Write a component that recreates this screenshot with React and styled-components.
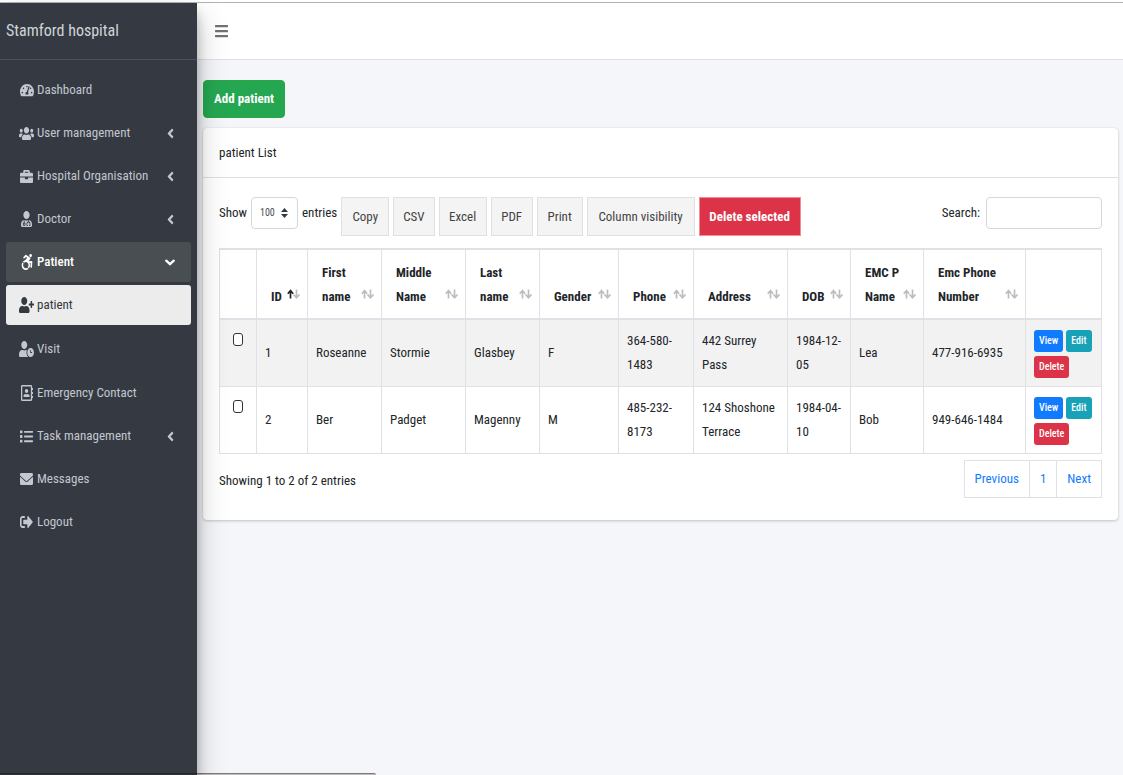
import React, { useState } from "react";
import styled, { createGlobalStyle, css } from "styled-components";
import {
  FaTachometerAlt,
  FaUsers,
  FaBriefcase,
  FaUserMd,
  FaAccessibleIcon,
  FaUserPlus,
  FaUserClock,
  FaRegAddressBook,
  FaList,
  FaEnvelope,
  FaSignOutAlt,
  FaAngleLeft,
  FaAngleDown,
  FaBars,
} from "react-icons/fa";

const GlobalStyle = createGlobalStyle`
  *, *::before, *::after { box-sizing: border-box; }
  body {
    margin: 0;
    background: #f4f6f9;
    color: #212529;
    font-family: "Roboto Condensed", "Source Sans 3", "Noto Sans CJK JP", sans-serif;
    font-size: 13px;
    line-height: 24px;
  }
  button, input, select { font: inherit; color: inherit; }
  a { text-decoration: none; }
`;

const Page = styled.div`
  display: flex;
  min-height: calc(100vh - 2px);
  margin-top: 2px;
  border-top: 1px solid #b3b2b5;
  box-shadow: 0 -2px 0 #fff;
`;

const Sidebar = styled.aside`
  position: relative;
  z-index: 2;
  flex: 0 0 197px;
  background: #353a42;
  box-shadow: 0 14px 28px rgba(0, 0, 0, 0.25), 0 10px 10px rgba(0, 0, 0, 0.22);
`;

const Brand = styled.a`
  display: flex;
  align-items: center;
  height: 57px;
  padding: 0 6px;
  border-bottom: 1px solid #4b545c;
  color: #d0d4d8;
  font-size: 16px;
`;

const Nav = styled.nav`
  padding: 10px 6px;
`;

const NavList = styled.ul`
  display: flex;
  flex-direction: column;
  gap: ${(p) => (p.$sub ? "4px" : "3px")};
  margin: 0;
  margin-top: ${(p) => (p.$sub ? "3px" : "0")};
  padding: 0;
  list-style: none;
`;

const NavLink = styled.a`
  display: flex;
  align-items: center;
  gap: 3px;
  height: 40px;
  padding: 0 16px 0 13px;
  border-radius: 3px;
  color: #c2c7d0;
  ${(p) =>
    p.$tone === "open" &&
    css`
      background: #494e52;
      color: #fff;
      font-weight: 500;
    `}
  ${(p) =>
    p.$tone === "current" &&
    css`
      background: #ebeceb;
      color: #343a40;
    `}
`;

const NavIcon = styled.span`
  display: flex;
  justify-content: center;
  width: 15px;
  svg {
    width: ${(p) => p.$w || 13}px;
    height: ${(p) => p.$h || 14}px;
  }
`;

const NavText = styled.span`
  flex: 1;
  white-space: nowrap;
`;

const Chevron = styled.span`
  display: flex;
  justify-content: center;
  width: 10px;
  svg {
    width: ${(p) => (p.$down ? 10 : 7)}px;
    height: 15px;
  }
`;

const Main = styled.div`
  flex: 1;
  min-width: 0;
`;

const TopBar = styled.header`
  display: flex;
  align-items: center;
  height: 57px;
  padding: 0 18px;
  background: #fff;
  border-bottom: 1px solid #dee2e6;
`;

const MenuButton = styled.button`
  display: flex;
  padding: 0;
  border: 0;
  background: none;
  color: #727272;
  svg {
    width: 13px;
    height: 16px;
  }
`;

const Content = styled.main`
  padding: 20px 5px 20px 6px;
`;

const AddButton = styled.button`
  height: 38px;
  padding: 0 10px;
  border: 1px solid #28a745;
  border-radius: 4px;
  background: #25a752;
  color: #fff;
  font-weight: 700;
`;

const Card = styled.section`
  margin-top: 10px;
  border-radius: 4px;
  background: #fff;
  box-shadow: 0 0 1px rgba(0, 0, 0, 0.13), 0 1px 3px rgba(0, 0, 0, 0.2);
`;

const CardHeader = styled.h2`
  margin: 0;
  padding: 13px 16px 12px;
  border-bottom: 1px solid #dfdfdf;
  font-size: 13px;
  font-weight: 400;
`;

const CardBody = styled.div`
  padding: 19px 16px 22px;
`;

const Tools = styled.div`
  display: flex;
  align-items: flex-start;
  justify-content: space-between;
  height: 51px;
`;

const ToolGroup = styled.div`
  display: flex;
  align-items: flex-start;
  gap: 4px;
`;

const Field = styled.label`
  display: flex;
  align-items: center;
  gap: ${(p) => p.$gap}px;
  height: 32px;
`;

const LengthBox = styled.span`
  display: flex;
  align-items: center;
  width: 47px;
  height: 32px;
  padding-right: 9px;
  border: 1px solid #d3d8dd;
  border-radius: 4px;
  svg {
    flex: none;
    width: 7px;
    height: 10px;
  }
`;

const LengthSelect = styled.select`
  flex: 1;
  min-width: 0;
  height: 28px;
  padding: 0 0 0 8px;
  border: 0;
  background: none;
  appearance: none;
  color: #495057;
  font-size: 10px;
`;

const SearchInput = styled.input`
  width: 116px;
  height: 32px;
  padding: 0 8px;
  border: 1px solid #d3d8dd;
  border-radius: 4px;
  background: #fff;
`;

const ToolButton = styled.button`
  min-width: ${(p) => p.$min}px;
  height: 39px;
  padding: 0 9px;
  border: 1px solid ${(p) => (p.$danger ? "#ee8f98" : "#dfe0e0")};
  background: ${(p) => (p.$danger ? "#dc3348" : "#f4f4f4")};
  color: ${(p) => (p.$danger ? "#fff" : "#444")};
  font-weight: ${(p) => (p.$danger ? 700 : 400)};
  white-space: nowrap;
`;

const Table = styled.table`
  width: 100%;
  table-layout: fixed;
  border-collapse: collapse;
  border: 1px solid #dee2e6;
`;

const Col = styled.col`
  width: ${(p) => p.$w}px;
`;

const HeadCell = styled.th`
  height: 70px;
  padding: 10px 6px 9px 14px;
  border: 1px solid #dee2e6;
  border-top-width: 2px;
  border-bottom-width: 2px;
  text-align: left;
  vertical-align: bottom;
`;

const HeadLabel = styled.span`
  display: flex;
  align-items: flex-end;
  justify-content: space-between;
  gap: 1px;
  svg {
    flex: none;
    width: 14px;
    height: 24px;
  }
`;

const BodyRow = styled.tr`
  background: ${(p) => (p.$striped ? "#f2f2f2" : "#fff")};
`;

const Cell = styled.td`
  height: 67px;
  padding: 7px 7px 7px 8px;
  border: 1px solid #dee2e6;
  vertical-align: ${(p) => (p.$top ? "top" : "middle")};
`;

const Check = styled.input`
  display: block;
  width: 10px;
  height: 13px;
  margin: 6px 0 0 5px;
  border: 1px solid #333;
  border-radius: 3px;
  background: #fff;
  appearance: none;
  &:checked {
    background: #0075ff;
  }
`;

const Actions = styled.div`
  display: flex;
  flex-wrap: wrap;
  gap: 4px 3px;
  padding-top: 3px;
`;

const ActionLink = styled.a`
  height: 22px;
  padding: 0 5px;
  border-radius: 3px;
  background: ${(p) => p.$color};
  color: #fff;
  font-size: 10px;
  font-weight: 500;
  line-height: 22px;
`;

const Footer = styled.div`
  display: flex;
  align-items: flex-start;
  justify-content: space-between;
  padding-top: 6px;
`;

const Info = styled.div`
  padding-top: 9px;
`;

const Pager = styled.nav`
  display: flex;
  border: 1px solid #dee2e6;
`;

const PageLink = styled.a`
  padding: 6px 10px;
  color: #107bff;
  & + & {
    border-left: 1px solid #dee2e6;
  }
`;

const StatusEdge = styled.div`
  position: fixed;
  z-index: 3;
  bottom: 0;
  left: 0;
  width: 376px;
  height: 2px;
  border-top: 1px solid rgba(30, 20, 25, 0.4);
  border-top-right-radius: 2px;
  background: rgba(30, 20, 25, 0.25);
`;

function SortArrows({ sorted }) {
  return (
    <svg viewBox="0 0 14 24" fill="none" strokeWidth="1.7" aria-hidden="true">
      <path d="M3.500 13.500V5.500M0.800 8.700L3.500 5.500L6.200 8.700" stroke={sorted ? "#212529" : "#bcbdbe"} />
      <path d="M9.500 4.500V12.500M6.500 9.500L9.500 12.800L12.500 9.500" stroke="#bcbdbe" />
    </svg>
  );
}

const beforePatient = [
  { label: "Dashboard", icon: FaTachometerAlt, w: 14 },
  { label: "User management", icon: FaUsers, w: 15, h: 15, more: true },
  { label: "Hospital Organisation", icon: FaBriefcase, h: 15, more: true },
  { label: "Doctor", icon: FaUserMd, w: 11, h: 16, more: true },
];

const patientItems = [
  { label: "patient", icon: FaUserPlus, w: 15, h: 16, tone: "current" },
  { label: "Visit", icon: FaUserClock, w: 15, h: 16 },
  { label: "Emergency Contact", icon: FaRegAddressBook, w: 12, h: 16 },
];

const afterPatient = [
  { label: "Task management", icon: FaList, h: 15, more: true },
  { label: "Messages", icon: FaEnvelope, h: 16 },
  { label: "Logout", icon: FaSignOutAlt, h: 16 },
];

const columns = [
  { w: 37 },
  { w: 51, label: "ID", sorted: true },
  { w: 74, label: "First name" },
  { w: 84, label: "Middle Name" },
  { w: 74, label: "Last name" },
  { w: 79, label: "Gender" },
  { w: 75, label: "Phone" },
  { w: 94, label: "Address" },
  { w: 63, label: "DOB" },
  { w: 73, label: "EMC P Name" },
  { w: 102, label: "Emc Phone Number" },
  { w: 76 },
];

const patients = [
  ["1", "Roseanne", "Stormie", "Glasbey", "F", "364-580-1483", "442 Surrey Pass", "1984-12-05", "Lea", "477-916-6935"],
  ["2", "Ber", "Padget", "Magenny", "M", "485-232-8173", "124 Shoshone Terrace", "1984-04-10", "Bob", "949-646-1484"],
];

const exportsList = [
  ["Copy", 48],
  ["CSV", 41],
  ["Excel", 48],
  ["PDF", 42],
  ["Print", 46],
  ["Column visibility", 108],
];

function NavItem({ item, children }) {
  const Icon = item.icon;
  return (
    <li>
      <NavLink href="#" $tone={item.tone}>
        <NavIcon $w={item.w} $h={item.h}>
          <Icon preserveAspectRatio="none" />
        </NavIcon>
        <NavText>{item.label}</NavText>
        {item.more && (
          <Chevron $down={item.tone === "open"}>
            {item.tone === "open" ? (
              <FaAngleDown preserveAspectRatio="none" />
            ) : (
              <FaAngleLeft preserveAspectRatio="none" />
            )}
          </Chevron>
        )}
      </NavLink>
      {children}
    </li>
  );
}

export default function App() {
  const [query, setQuery] = useState("");
  return (
    <>
      <GlobalStyle />
      <Page>
        <Sidebar>
          <Brand href="#">Stamford hospital</Brand>
          <Nav>
            <NavList>
              {beforePatient.map((item) => (
                <NavItem key={item.label} item={item} />
              ))}
              <NavItem item={{ label: "Patient", icon: FaAccessibleIcon, w: 12, h: 16, more: true, tone: "open" }}>
                <NavList $sub>
                  {patientItems.map((item) => (
                    <NavItem key={item.label} item={item} />
                  ))}
                </NavList>
              </NavItem>
              {afterPatient.map((item) => (
                <NavItem key={item.label} item={item} />
              ))}
            </NavList>
          </Nav>
        </Sidebar>
        <Main>
          <TopBar>
            <MenuButton aria-label="Toggle menu">
              <FaBars preserveAspectRatio="none" />
            </MenuButton>
          </TopBar>
          <Content>
            <AddButton>Add patient</AddButton>
            <Card>
              <CardHeader>patient List</CardHeader>
              <CardBody>
                <Tools>
                  <ToolGroup>
                    <Field $gap={4}>
                      Show
                      <LengthBox>
                        <LengthSelect defaultValue="100">
                          <option>10</option>
                          <option>25</option>
                          <option>50</option>
                          <option>100</option>
                        </LengthSelect>
                        <svg viewBox="0 0 7 10" fill="#343a40" aria-hidden="true">
                          <path d="M0 4L3.500 0L7 4ZM0 6H7L3.500 10Z" />
                        </svg>
                      </LengthBox>
                      entries
                    </Field>
                    {exportsList.map(([label, min]) => (
                      <ToolButton key={label} $min={min}>
                        {label}
                      </ToolButton>
                    ))}
                    <ToolButton $danger $min={102}>
                      Delete selected
                    </ToolButton>
                  </ToolGroup>
                  <Field $gap={6}>
                    Search:
                    <SearchInput type="search" value={query} onChange={(e) => setQuery(e.target.value)} />
                  </Field>
                </Tools>
                <Table>
                  <colgroup>
                    {columns.map((c, i) => (
                      <Col key={i} $w={c.w} />
                    ))}
                  </colgroup>
                  <thead>
                    <tr>
                      {columns.map((c, i) => (
                        <HeadCell key={i} scope="col">
                          {c.label && (
                            <HeadLabel>
                              {c.label}
                              <SortArrows sorted={c.sorted} />
                            </HeadLabel>
                          )}
                        </HeadCell>
                      ))}
                    </tr>
                  </thead>
                  <tbody>
                    {patients.map((row, i) => (
                      <BodyRow key={row[0]} $striped={i % 2 === 0}>
                        <Cell $top>
                          <Check type="checkbox" aria-label={`Select ${row[1]}`} />
                        </Cell>
                        {row.map((value, j) => (
                          <Cell key={j}>{value}</Cell>
                        ))}
                        <Cell>
                          <Actions>
                            <ActionLink href="#" $color="#107bff">
                              View
                            </ActionLink>
                            <ActionLink href="#" $color="#17a2b8">
                              Edit
                            </ActionLink>
                            <ActionLink href="#" $color="#dc3348">
                              Delete
                            </ActionLink>
                          </Actions>
                        </Cell>
                      </BodyRow>
                    ))}
                  </tbody>
                </Table>
                <Footer>
                  <Info>Showing 1 to 2 of 2 entries</Info>
                  <Pager aria-label="Pages">
                    <PageLink href="#">Previous</PageLink>
                    <PageLink href="#">1</PageLink>
                    <PageLink href="#">Next</PageLink>
                  </Pager>
                </Footer>
              </CardBody>
            </Card>
          </Content>
        </Main>
      </Page>
      <StatusEdge />
    </>
  );
}
